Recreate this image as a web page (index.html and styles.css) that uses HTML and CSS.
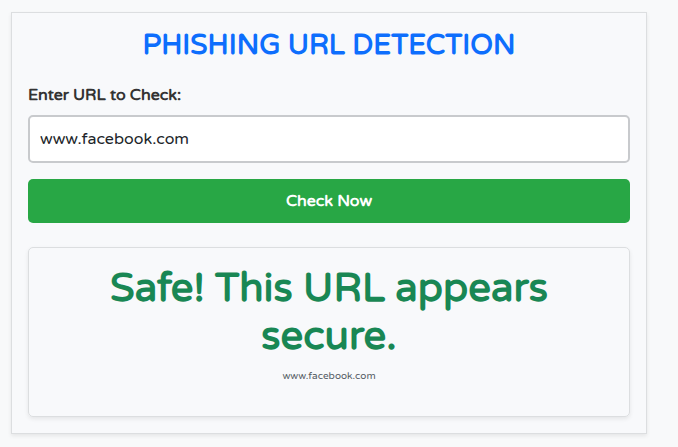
FILE: index.html
```html
<!DOCTYPE html>
<html lang="en">
<head>
<meta charset="utf-8">
<meta name="viewport" content="width=device-width, initial-scale=1">
<title>Phishing URL Detection</title>
<link rel="stylesheet" href="styles.css">
</head>
<body>
<main class="card">
  <h1 class="title">PHISHING URL DETECTION</h1>
  <form class="form">
    <label class="label" for="url">Enter URL to Check:</label>
    <input class="input" id="url" name="url" type="text" value="www.facebook.com">
    <button class="button" type="button">Check Now</button>
  </form>
  <section class="result">
    <h2 class="verdict">Safe! This URL appears secure.</h2>
    <p class="checked">www.facebook.com</p>
  </section>
</main>
</body>
</html>
```
FILE: styles.css
```css
* {
  box-sizing: border-box;
}

body {
  margin: 0;
  padding: 12px 31px 12px 11px;
  background: #f8f9fa;
  color: #333;
  font-family: "Varela Round", "Open Sans", sans-serif;
  font-size: 16px;
  line-height: 24px;
}

.card {
  padding: 16px;
  border: 1px solid #dcdee0;
  background: #f8f9fb;
  box-shadow: 0 2px 4px rgba(0, 0, 0, 0.08);
}

.title {
  margin: 0 0 22px;
  color: #0d6efd;
  font-size: 28px;
  font-weight: 700;
  line-height: 32px;
  text-align: center;
}

.form {
  display: flex;
  flex-direction: column;
}

.label {
  margin-bottom: 8px;
  font-size: 16px;
  font-weight: 700;
  line-height: 24px;
}

.input {
  width: 100%;
  height: 48px;
  margin-bottom: 16px;
  padding: 10px;
  border: 2px solid #c8cacd;
  border-radius: 5px;
  background: #fff;
  color: #212529;
  font: inherit;
}

.button {
  height: 44px;
  border: 0;
  border-radius: 5px;
  background: #28a745;
  color: #fff;
  font: inherit;
  font-weight: 700;
}

.result {
  margin-top: 24px;
  padding: 16px 16px 32px;
  border: 1px solid #dcdee0;
  border-radius: 5px;
  box-shadow: 0 2px 4px rgba(0, 0, 0, 0.08);
  text-align: center;
}

.verdict {
  margin: 0 0 8px;
  color: #198754;
  font-size: 40px;
  font-weight: 700;
  line-height: 48px;
}

.checked {
  margin: 0;
  color: #555c64;
  font-size: 10px;
  line-height: 16px;
}
```
